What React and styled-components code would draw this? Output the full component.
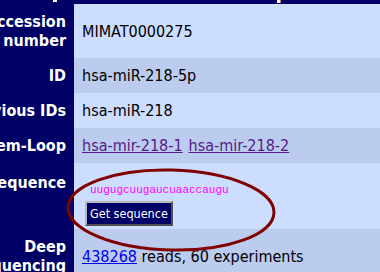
import React from 'react';
import styled, { createGlobalStyle } from 'styled-components';

const navy = '#000066';

const GlobalStyle = createGlobalStyle`
  body {
    margin: 0;
    background: ${navy};
    font-family: "DejaVu Sans Condensed", "DejaVu Sans", sans-serif;
  }
`;

const Viewport = styled.div`
  position: relative;
  width: 380px;
  height: 272px;
  overflow: hidden;
  background: ${navy};
`;

const Table = styled.div`
  margin-left: -56px;
  display: flex;
  flex-direction: column;
`;

const HeaderRow = styled.div`
  height: 4px;
  background: ${navy};
  display: flex;
  align-items: flex-start;
`;

const Mark = styled.span`
  display: block;
  width: ${p => p.$w}px;
  height: ${p => p.$h}px;
  margin-left: ${p => p.$x}px;
  background: ${p => p.$bg};
`;

const Row = styled.div`
  display: grid;
  grid-template-columns: 130px 1fr;
  background: ${p => (p.$alt ? '#bbccee' : '#ccddff')};
`;

const Label = styled.div`
  background: ${navy};
  color: #ffffff;
  font-weight: bold;
  font-size: 16px;
  line-height: 19px;
  text-align: right;
  padding: ${p => (p.$top ? '10px' : '8px')} 8px 8px;
  display: flex;
  flex-direction: column;
  justify-content: ${p => (p.$top ? 'flex-start' : 'center')};
`;

const Value = styled.div`
  font-size: 16px;
  line-height: 19px;
  color: #000000;
  padding: 8px;
  display: flex;
  align-items: center;
  gap: 6px;
`;

const SequenceValue = styled.div`
  padding: 8px 8px 3px;
  display: flex;
  flex-direction: column;
  align-items: flex-start;
`;

const Link = styled.a`
  color: ${p => (p.$visited ? '#551a8b' : '#0000ee')};
  text-decoration: underline;
`;

const Sequence = styled.div`
  font-family: "Liberation Mono", "Courier New", monospace;
  font-size: 11px;
  line-height: 14px;
  color: #ff00ff;
  height: 30px;
  box-sizing: border-box;
  padding-top: 12px;
  margin-left: 8px;
`;

const Button = styled.button`
  margin: 0 0 0 3px;
  height: 25px;
  padding: 0 3px;
  background: ${navy};
  color: #ffffff;
  font-family: "DejaVu Sans Condensed", "DejaVu Sans", sans-serif;
  font-size: 12.5px;
  border: 2px solid;
  border-color: #b8b8b8 #505050 #505050 #b8b8b8;
`;

const Overlay = styled.svg`
  position: absolute;
  left: 0;
  top: 0;
  pointer-events: none;
`;

export default function App() {
  return (
    <Viewport>
      <GlobalStyle />
      <Table>
        <HeaderRow>
          <Mark $x={109} $w={4} $h={2} $bg="#ffffff" />
          <Mark $x={220} $w={3} $h={3} $bg="#ffffff" />
          <Mark $x={0} $w={1} $h={3} $bg="#d08060" />
        </HeaderRow>
        <Row>
          <Label>Accession number</Label>
          <Value>MIMAT0000275</Value>
        </Row>
        <Row $alt>
          <Label>ID</Label>
          <Value>hsa-miR-218-5p</Value>
        </Row>
        <Row>
          <Label>Previous IDs</Label>
          <Value>hsa-miR-218</Value>
        </Row>
        <Row $alt>
          <Label>Stem-Loop</Label>
          <Value>
            <Link $visited href="#">hsa-mir-218-1</Link>
            <Link $visited href="#">hsa-mir-218-2</Link>
          </Value>
        </Row>
        <Row>
          <Label $top>Sequence</Label>
          <SequenceValue>
            <Sequence>uugugcuugaucuaaccaugu</Sequence>
            <Button type="button">Get sequence</Button>
          </SequenceValue>
        </Row>
        <Row $alt>
          <Label>Deep sequencing</Label>
          <Value>
            <span>
              <Link href="#">438268</Link> reads, 60 experiments
            </span>
          </Value>
        </Row>
      </Table>
      <Overlay width="380" height="272" viewBox="0 0 380 272">
        <ellipse
          cx="171"
          cy="210"
          rx="103"
          ry="40"
          transform="rotate(1.5 171 210)"
          fill="none"
          stroke="#800000"
          strokeWidth="3"
        />
      </Overlay>
    </Viewport>
  );
}
